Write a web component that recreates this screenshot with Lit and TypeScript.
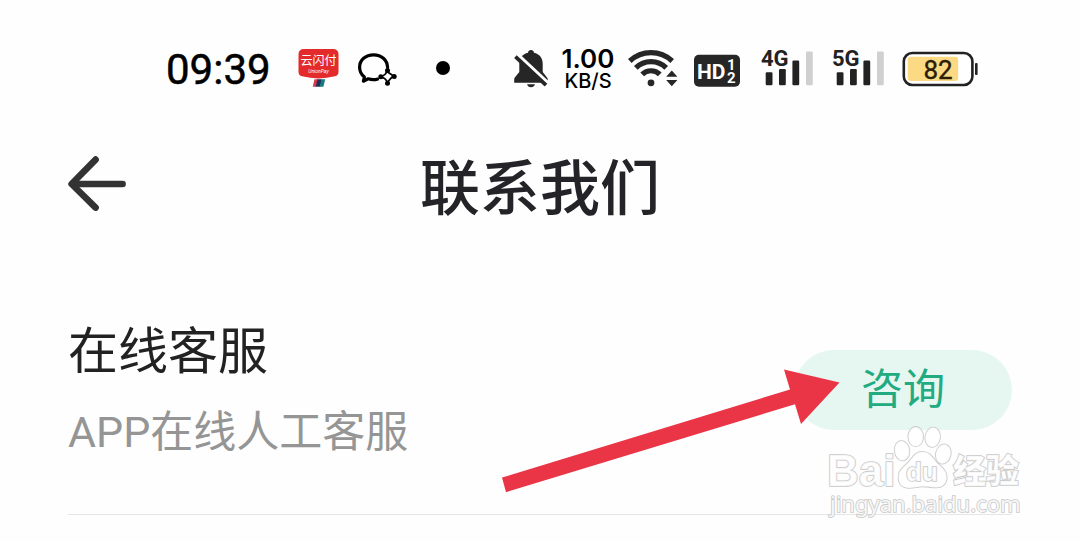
import { LitElement, html, css, svg } from "lit";
import { customElement, property } from "lit/decorators.js";

@customElement("status-bar")
export class StatusBar extends LitElement {
  @property() time = "09:39";
  @property() speed = "1.00";
  @property({ type: Number }) battery = 82;

  static styles = css`
    :host { display: flex; justify-content: space-between; align-items: center; padding: 48px 102px 0 166px; color: #000; font-family: Roboto, "Noto Sans CJK SC", sans-serif; }
    .group { display: flex; align-items: center; height: 40px; }
    .left { gap: 18px; }
    .right { gap: 12px; }
    .time { font-size: 42px; line-height: 40px; font-weight: 400; width: 114px; padding-top: 4px; -webkit-text-stroke: 0.5px #000; }
    .dot { width: 14px; height: 14px; border-radius: 50%; background: #000; margin-left: 20px; }
    .speed { width: 56px; padding-top: 4px; text-align: center; font-family: Inter, sans-serif; }
    .rate { font-size: 26px; line-height: 22px; font-weight: 600; }
    .unit { font-size: 20px; line-height: 22px; font-weight: 500; }
    svg { display: block; flex: none; overflow: visible; }
    .bold { font-family: Roboto, sans-serif; font-weight: 700; }
  `;

  private signal(label: string) {
    return html`<svg width="59" height="40" viewBox="0 0 59 40" role="img" aria-label="${label}">
      <g fill="#222">
        <text class="bold" x="1" y="18" font-size="22">${label}</text>
        <rect x="5.7" y="24.3" width="6.8" height="13" rx="1.2" />
        <rect x="19" y="21" width="6.8" height="16.3" rx="1.2" />
        <rect x="32.4" y="12.6" width="6.8" height="24.7" rx="1.2" />
      </g>
      <rect x="46" y="3.6" width="6.8" height="33.7" rx="1.2" fill="#d0d0d0" />
    </svg>`;
  }

  render() {
    return html`
      <div class="group left">
        <span class="time">${this.time}</span>
        <svg width="41" height="40" viewBox="0 0 41 40" role="img" aria-label="云闪付">
          <path d="M6 1H35Q40.5 1 40.5 6.5V24Q40.5 27.4 37 28.3Q20.5 32.6 4 28.3Q.5 27.4 .5 24V6.5Q.5 1 6 1Z" fill="#e32b2b" />
          <text x="20.5" y="17" text-anchor="middle" font-size="12" fill="#fff" font-family="Noto Sans CJK SC">云闪付</text>
          <text x="20.5" y="25" text-anchor="middle" font-size="5" font-style="italic" fill="#fff">UnionPay</text>
          <path d="M16.5 31.3H20L18.2 38.8H14.7Z" fill="#d8384a" />
          <path d="M19.5 31.3H24L22.2 38.8H17.7Z" fill="#1c3158" />
          <path d="M23.5 31.3H27.2L25.4 38.8H21.7Z" fill="#147a83" />
        </svg>
        <svg width="41" height="40" viewBox="0 0 41 40" role="img" aria-label="chat">
          <path d="M30.6 19.5C30.3 11.6 24.3 6.8 16.6 6.8C8.6 6.8 2.6 12 2.6 19.2C2.6 23.5 4.6 26.8 7.4 29L6.4 33.2L11.2 30.8C14.2 31.8 17.5 31.9 20.5 31.1" fill="none" stroke="#000" stroke-width="3.2" stroke-linecap="round" stroke-linejoin="round" />
          <path d="M30.5 22.5Q30.5 24.5 34 26.2L36.8 28.2Q34.5 29.3 33.2 31L30.5 34.5Q29.5 32 27.5 30.4L24 28.7Q27 27.5 28.4 26Z" fill="none" stroke="#000" stroke-width="1.8" />
          <circle cx="30.5" cy="22.4" r="2.5" /><circle cx="37.2" cy="28.4" r="2.5" />
          <circle cx="30.5" cy="35.3" r="2.5" /><circle cx="23.8" cy="28.7" r="2.5" />
        </svg>
        <span class="dot"></span>
      </div>
      <div class="group right">
        <svg width="36" height="40" viewBox="0 0 36 40" role="img" aria-label="muted">
          <path d="M19 2C20.7 2 21.8 3 22 4.7C27.5 6 30.7 10 30.7 15.5V24L35 29.5Q35.8 30.4 35.8 32V34.7H2.2V31.4Q2.2 30 3.2 29L7.3 24V15.5C7.3 10 10.5 6 16 4.7C16.2 3 17.3 2 19 2Z" fill="#262626" />
          <path d="M15 36.2H23Q22 39.2 19 39.2T15 36.2Z" fill="#262626" />
          <path d="M4 5L38 36.8" stroke="#fefefe" stroke-width="3.4" />
          <path d="M3.4 8.6L34 37.2" stroke="#262626" stroke-width="3.8" />
        </svg>
        <div class="speed"><div class="rate">${this.speed}</div><div class="unit">KB/S</div></div>
        <svg width="52" height="40" viewBox="0 0 52 40" role="img" aria-label="Wi-Fi">
          <g fill="none" stroke="#262626" stroke-width="5.2">
            <path d="M1.8 13A31 31 0 0 1 44.2 13" />
            <path d="M7.8 19.8A21.6 21.6 0 0 1 38.2 19.8" />
            <path d="M14.2 26.4A12.4 12.4 0 0 1 31.8 26.4" />
          </g>
          <circle cx="23" cy="34.8" r="3.4" fill="#262626" />
          <path d="M43.8 22.6L49.4 28.7H38.2ZM38.2 32H49.4L43.8 38.2Z" fill="#262626" />
        </svg>
        <svg width="56" height="40" viewBox="0 0 56 40" role="img" aria-label="HD">
          <rect x="2" y="6.8" width="46" height="32" rx="5" fill="#262626" />
          <g fill="#fff">
            <text class="bold" x="5" y="31" font-size="21">HD</text>
            <text class="bold" x="35" y="22" font-size="15">1</text>
            <text class="bold" x="35" y="35" font-size="15">2</text>
          </g>
        </svg>
        ${this.signal("4G")}${this.signal("5G")}
        <svg width="76" height="40" viewBox="0 0 76 40" role="img" aria-label="battery">
          <rect x="1.8" y="5" width="68.6" height="32" rx="8.5" fill="#fff" stroke="#222" stroke-width="2.6" />
          <rect x="5.7" y="8.7" width="${(this.battery * 61.6) / 100}" height="24.4" rx="3" fill="#fbda83" />
          <rect x="73" y="15" width="2.6" height="12" rx="1" fill="#222" />
          <text x="36" y="31" text-anchor="middle" font-size="26" fill="#2c1d06" stroke="#2c1d06" stroke-width="0.4">${this.battery}</text>
        </svg>
      </div>`;
  }
}

@customElement("site-mark")
export class SiteMark extends LitElement {
  static styles = css`
    :host { display: block; pointer-events: none; }
    svg { display: block; overflow: visible; }
    text, .paw { fill: #fff; fill-opacity: 0.85; stroke: #c9c9c9; stroke-width: 1.6; paint-order: stroke; }
    .latin { font-family: "Liberation Sans", sans-serif; font-weight: 700; }
    .han { font-family: "Noto Sans CJK SC", sans-serif; font-weight: 900; }
    .url { font-family: "Noto Sans", sans-serif; font-weight: 400; }
  `;
  render() {
    const toes = [[78, 26.7, -8], [91.7, 12.7, 0], [108.7, 13.3, 8], [119.3, 30, 14]];
    return html`<svg width="200" height="100" viewBox="0 0 200 100" aria-hidden="true">
      <text class="latin" x="3" y="62" font-size="44">Bai</text>
      ${toes.map(([x, y, r]) => svg`<ellipse class="paw" cx=${x} cy=${y} rx="7.4" ry="9.8" transform="rotate(${r} ${x} ${y})" />`)}
      <path class="paw" d="M98.5 27.7C105 27.7 108 32.5 111.5 37C116 42.5 122.7 45 122.7 53.5C122.7 60 118 64 111.5 63.5C106 63 103 62.5 98.5 62.5S90 64 85 64C78.5 64 74.5 60 74.5 53.5C74.5 45 81 42.5 85.5 37C89.5 32 92 27.7 98.5 27.7Z" />
      <text class="latin" x="82" y="57" font-size="26">du</text>
      <text class="han" x="129" y="59" font-size="33">经验</text>
      <text class="url" x="6" y="88" font-size="22">jingyan.baidu.com</text>
    </svg>`;
  }
}

@customElement("app-root")
export class AppRoot extends LitElement {
  static styles = css`
    :host { display: block; min-height: 100vh; overflow: hidden; background: #fefefe; font-family: Roboto, "Noto Sans CJK SC", sans-serif; }
    header { display: grid; grid-template-columns: 60px 1fr 60px; align-items: start; padding: 66px 68px 0; }
    button { border: 0; padding: 0; font: inherit; cursor: pointer; }
    .back { background: none; width: 60px; height: 60px; }
    svg { display: block; }
    h1 { margin: 0; text-align: center; font-size: 60px; line-height: 72px; font-weight: 500; color: #242428; }
    .contact { position: relative; display: flex; align-items: center; justify-content: space-between; margin: 96px 68px 0; padding-bottom: 56px; border-bottom: 1px solid #e6e6e6; }
    h2 { margin: 0; font-size: 50px; line-height: 60px; font-weight: 400; color: #222; }
    p { margin: 24px 0 0; font-size: 43px; line-height: 52px; color: #959595; }
    .action { position: relative; }
    .consult { display: block; width: 218px; height: 80px; border-radius: 40px; background: #e6f7f1; color: #22ab80; font-size: 42px; line-height: 80px; }
    .pointer { position: absolute; right: 172px; top: 18px; pointer-events: none; }
    .mark { position: absolute; right: -12px; top: 102px; }
  `;

  render() {
    return html`
      <status-bar></status-bar>
      <header>
        <button class="back" aria-label="返回">
          <svg width="60" height="60" viewBox="0 0 60 60" fill="none" stroke="#333" stroke-width="6.6" stroke-linecap="round" stroke-linejoin="round">
            <path d="M27.6 5.6L3.6 30L27.6 53.6" /><path d="M5 30H54.6" />
          </svg>
        </button>
        <h1>联系我们</h1>
      </header>
      <main>
        <section class="contact">
          <div>
            <h2>在线客服</h2>
            <p>APP在线人工客服</p>
          </div>
          <div class="action">
            <button class="consult">咨询</button>
            <svg class="pointer" width="340" height="126" viewBox="0 0 340 126" aria-hidden="true">
              <path d="M2 109.6L290 21.5L284 1.4L339.5 14.4L301 56L295 36.3L6 124.2Z" fill="#ea3546" />
            </svg>
          </div>
          <site-mark class="mark"></site-mark>
        </section>
      </main>`;
  }
}
